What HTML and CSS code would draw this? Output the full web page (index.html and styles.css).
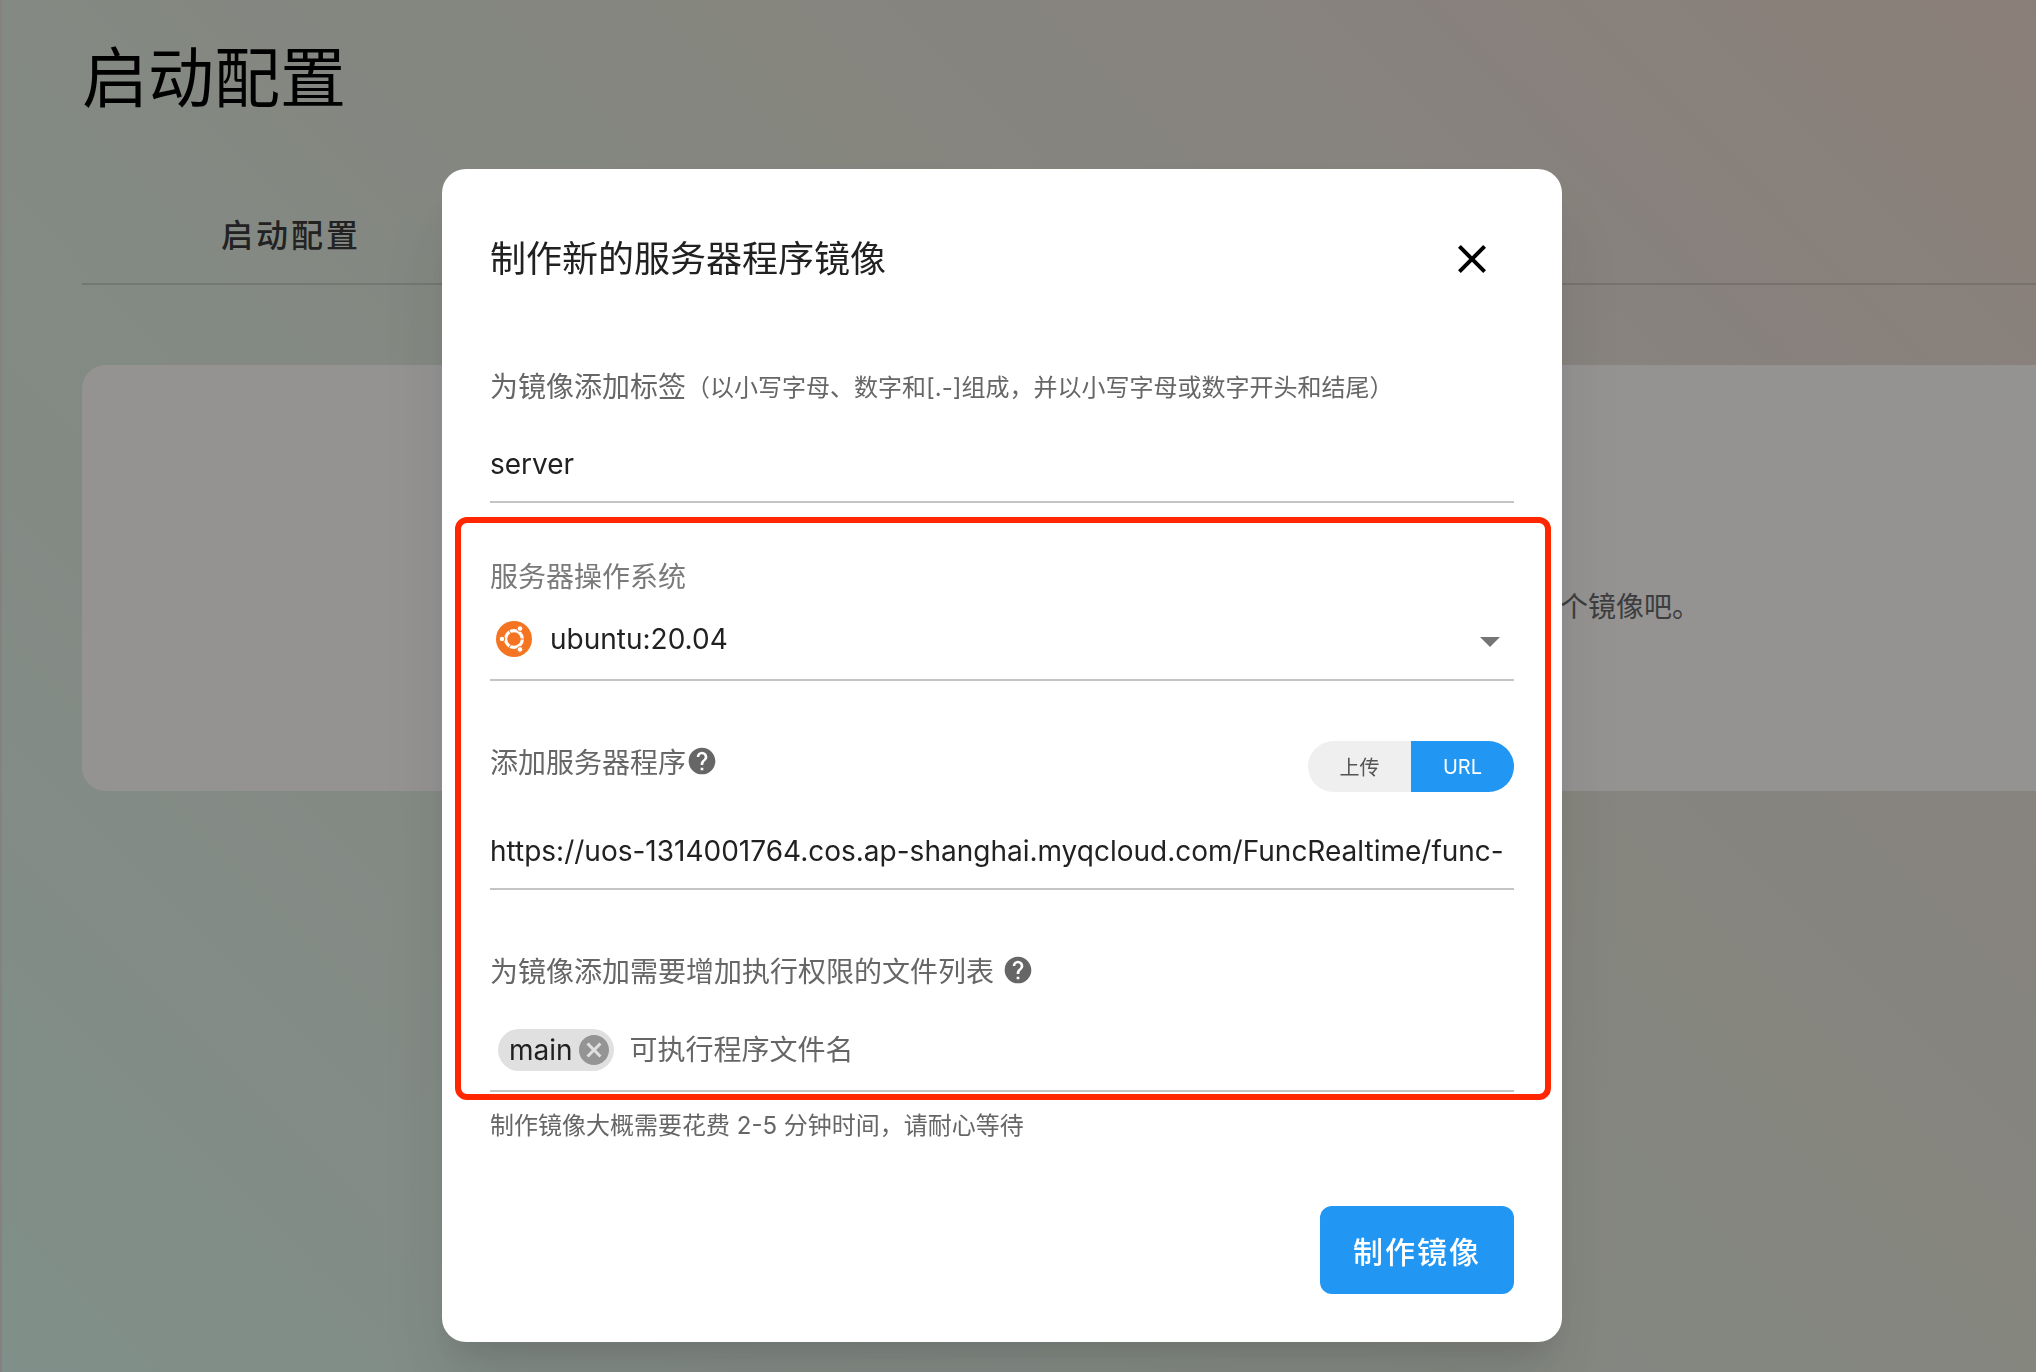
FILE: index.html
```html
<!DOCTYPE html>
<html lang="zh-CN">
<head>
    <meta charset="UTF-8">
    <title>启动配置</title>
    <link rel="stylesheet" href="styles.css">
</head>
<body>
    <main class="page">
        <h1 class="page-title">启动配置</h1>
        <nav class="tabs">
            <a class="tab" href="#config">启动配置</a>
        </nav>
        <section class="card" id="config">
            <p class="card-text">个镜像吧。</p>
        </section>
    </main>

    <div class="overlay">
        <form class="dialog" role="dialog" aria-labelledby="dialogTitle">
            <header class="dialog-header">
                <h2 class="dialog-title" id="dialogTitle">制作新的服务器程序镜像</h2>
                <button class="icon-button" type="button" aria-label="关闭">
                    <svg class="icon-close" viewBox="0 0 24 24"><path d="M19,6.41L17.59,5L12,10.59L6.41,5L5,6.41L10.59,12L5,17.59L6.41,19L12,13.41L17.59,19L19,17.59L13.41,12L19,6.41Z"/></svg>
                </button>
            </header>

            <label class="label" for="tag">为镜像添加标签<span class="label-note">（以小写字母、数字和[.-]组成，并以小写字母或数字开头和结尾）</span></label>
            <input class="input" type="text" id="tag" value="server">

            <div class="highlight">
                <label class="label label-light" for="os">服务器操作系统</label>
                <div class="select-row">
                    <svg class="icon-ubuntu" viewBox="0 0 36 36">
                        <circle cx="18" cy="18" r="18" fill="#f47421"/>
                        <circle cx="18" cy="18" r="8.4" fill="none" stroke="#fff" stroke-width="3.2"/>
                        <g stroke="#f47421" stroke-width="1">
                            <path d="M24 18h6M15 12.8l-3-5.2M15 23.2l-3 5.2"/>
                            <circle cx="6" cy="18" r="2.8" fill="#fff"/>
                            <circle cx="24" cy="7.6" r="2.8" fill="#fff"/>
                            <circle cx="24" cy="28.4" r="2.8" fill="#fff"/>
                        </g>
                    </svg>
                    <select class="select" id="os">
                        <option>ubuntu:20.04</option>
                    </select>
                    <svg class="icon-arrow" viewBox="0 -1 24 24"><path d="M7,10L12,15L17,10H7Z"/></svg>
                </div>

                <div class="program-row">
                    <label class="label" for="url">添加服务器程序<svg class="icon-help" viewBox="0 0 24 24"><path d="M15.07,11.25L14.17,12.17C13.45,12.89 13,13.5 13,15H11V14.5C11,13.39 11.45,12.39 12.17,11.67L13.41,10.41C13.78,10.05 14,9.55 14,9C14,7.89 13.1,7 12,7A2,2 0 0,0 10,9H8A4,4 0 0,1 12,5A4,4 0 0,1 16,9C16,9.88 15.64,10.67 15.07,11.25M13,19H11V17H13M12,2A10,10 0 0,0 2,12A10,10 0 0,0 12,22A10,10 0 0,0 22,12C22,6.47 17.5,2 12,2Z"/></svg></label>
                    <div class="toggle">
                        <button class="toggle-button" type="button">上传</button>
                        <button class="toggle-button active" type="button">URL</button>
                    </div>
                </div>
                <input class="input" type="text" id="url" value="https://uos-1314001764.cos.ap-shanghai.myqcloud.com/FuncRealtime/func-">

                <label class="label label-files" for="files">为镜像添加需要增加执行权限的文件列表<svg class="icon-help" viewBox="0 0 24 24"><path d="M15.07,11.25L14.17,12.17C13.45,12.89 13,13.5 13,15H11V14.5C11,13.39 11.45,12.39 12.17,11.67L13.41,10.41C13.78,10.05 14,9.55 14,9C14,7.89 13.1,7 12,7A2,2 0 0,0 10,9H8A4,4 0 0,1 12,5A4,4 0 0,1 16,9C16,9.88 15.64,10.67 15.07,11.25M13,19H11V17H13M12,2A10,10 0 0,0 2,12A10,10 0 0,0 12,22A10,10 0 0,0 22,12C22,6.47 17.5,2 12,2Z"/></svg></label>
                <div class="chips-row">
                    <span class="chip">main
                        <button class="chip-close" type="button" aria-label="删除">
                            <svg class="icon-chip" viewBox="0 0 24 24"><path d="M12,2C17.53,2 22,6.47 22,12C22,17.53 17.53,22 12,22C6.47,22 2,17.53 2,12C2,6.47 6.47,2 12,2M15.59,7L12,10.59L8.41,7L7,8.41L10.59,12L7,15.59L8.41,17L12,13.41L15.59,17L17,15.59L13.41,12L17,8.41L15.59,7Z"/></svg>
                        </button>
                    </span>
                    <input class="chips-input" type="text" id="files" placeholder="可执行程序文件名">
                </div>
            </div>

            <p class="hint">制作镜像大概需要花费 2-5 分钟时间，请耐心等待</p>
            <footer class="dialog-footer">
                <button class="submit" type="submit">制作镜像</button>
            </footer>
        </form>
    </div>
</body>
</html>
```
FILE: styles.css
```css
* {
    box-sizing: border-box;
}
body {
    margin: 0;
    min-height: 100vh;
    overflow: hidden;
    background: linear-gradient(45deg, #d5efe4 0%, #dae9e0 17%, #dce4da 40%, #dedfd3 60%, #e2d9d1 80%, #e7d4c9 100%);
    font-family: Inter, "Noto Sans CJK SC", sans-serif;
    font-size: 28px;
    color: #212121;
}
h1, h2, p {
    margin: 0;
    font-weight: 400;
}
button, input, select {
    font: inherit;
    color: inherit;
    border: none;
    background: none;
    padding: 0;
    outline: none;
}
button {
    cursor: pointer;
}
svg {
    display: block;
    flex: none;
    fill: currentColor;
}

/* page behind the dialog */
.page {
    min-height: 100vh;
    padding: 28px 0 0 80px;
    border-left: 2px solid #dcd8d5;
}
.page-title {
    font-size: 66px;
    line-height: 100px;
    color: #000;
}
.tabs {
    display: flex;
    margin-top: 60px;
    padding-left: 139px;
    border-bottom: 2px solid rgba(0, 0, 0, 0.12);
}
.tab {
    font-size: 32px;
    font-weight: 500;
    line-height: 95px;
    letter-spacing: 3px;
    color: #3a3a3a;
    text-decoration: none;
}
.card {
    display: flex;
    align-items: center;
    justify-content: flex-end;
    margin-top: 80px;
    min-height: 426px;
    padding: 54px 336px 0 48px;
    border-radius: 24px 0 0 24px;
    background: #f7f5f4;
}
.card-text {
    color: #666;
}

/* dialog */
.overlay {
    position: fixed;
    inset: 0;
    padding: 169px 474px 0 442px;
    background: rgba(0, 0, 0, 0.4);
}
.dialog {
    padding: 64px 48px 48px;
    border-radius: 24px;
    background: #fff;
    box-shadow: 0 22px 30px -14px rgba(0, 0, 0, 0.12), 0 48px 76px 6px rgba(0, 0, 0, 0.08);
}
.dialog-header {
    display: flex;
    align-items: center;
    justify-content: space-between;
    height: 52px;
    margin-bottom: 80px;
    padding-right: 18px;
}
.dialog-title {
    font-size: 36px;
    line-height: 50px;
}
.icon-button {
    color: #000;
}
.icon-close, .icon-arrow {
    width: 48px;
    height: 48px;
}
.label {
    display: flex;
    align-items: center;
    height: 40px;
    color: #666;
}
.label-light {
    color: #7a7a7a;
}
.label-note {
    font-size: 24px;
}
.input {
    display: block;
    width: 100%;
    height: 76px;
    margin-top: 22px;
    border-bottom: 2px solid #c4c4c4;
}
.highlight {
    margin: 14px -37px 0 -35px;
    padding: 32px 31px 2px 29px;
    border: 6px solid #ff2600;
    border-radius: 12px;
}
.select-row {
    display: flex;
    align-items: center;
    height: 86px;
    padding: 4px 0 0 6px;
    border-bottom: 2px solid #c4c4c4;
}
.icon-ubuntu {
    width: 36px;
    height: 36px;
    margin-right: 18px;
}
.select {
    flex: 1;
    height: 100%;
    appearance: none;
}
.icon-arrow {
    color: #757575;
}
.program-row {
    display: flex;
    justify-content: space-between;
    margin-top: 60px;
}
.icon-help {
    width: 32px;
    height: 32px;
}
.toggle {
    display: flex;
    border-radius: 26px;
    overflow: hidden;
    background: #efefef;
}
.toggle-button {
    width: 103px;
    height: 51px;
    font-size: 20px;
    color: #555;
}
.toggle-button.active {
    background: #2196f3;
    color: #fff;
}
.label-files {
    gap: 8px;
    margin-top: 60px;
}
.chips-row {
    display: flex;
    align-items: center;
    gap: 16px;
    height: 82px;
    margin-top: 20px;
    padding-left: 8px;
    border-bottom: 2px solid #c4c4c4;
}
.chip {
    display: flex;
    align-items: center;
    gap: 3px;
    height: 42px;
    padding: 0 2px 0 11px;
    border-radius: 21px;
    background: #e0e0e0;
}
.chip-close {
    color: #949494;
}
.icon-chip {
    width: 36px;
    height: 36px;
}
.chips-input {
    flex: 1;
    height: 100%;
}
.chips-input::placeholder {
    color: #666;
    opacity: 1;
}
.hint {
    margin-top: 8px;
    font-size: 24px;
    line-height: 36px;
    color: #666;
}
.dialog-footer {
    display: flex;
    justify-content: flex-end;
    margin-top: 62px;
}
.submit {
    height: 88px;
    padding: 0 33px;
    border-radius: 12px;
    background: #2196f3;
    color: #fff;
    font-size: 30px;
    font-weight: 500;
    letter-spacing: 2px;
}
```
